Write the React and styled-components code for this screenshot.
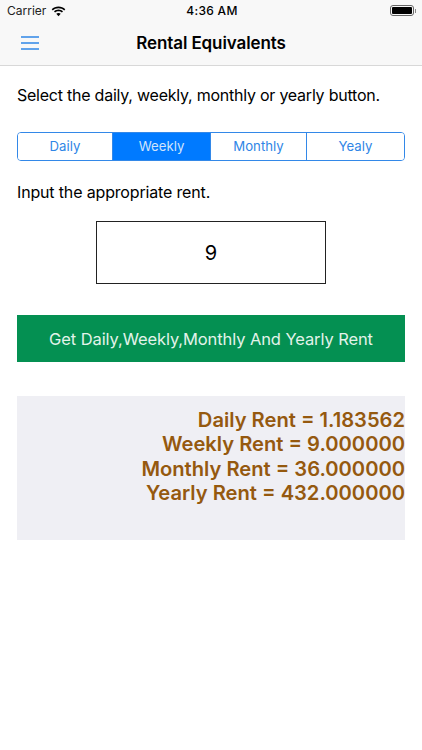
import React from 'react';
import styled, { createGlobalStyle } from 'styled-components';

const GlobalStyle = createGlobalStyle`
  html, body {
    margin: 0;
    padding: 0;
    background: #ffffff;
    font-family: Inter, "Liberation Sans", sans-serif;
    color: #000000;
  }
`;

const segments = ['Daily', 'Weekly', 'Monthly', 'Yealy'];
const results = [
  'Daily Rent = 1.183562',
  'Weekly Rent = 9.000000',
  'Monthly Rent = 36.000000',
  'Yearly Rent = 432.000000',
];

const App = () => {
  return (
    <Page>
      <GlobalStyle />
      <Header>
        <StatusBar>
          <Carrier>
            Carrier
            <svg width="15" height="11" viewBox="0 0 15 11">
              <path d="M7.5 2.2c2.2 0 4.2.8 5.7 2.2l1.1-1.2C12.5 1.5 10.1.5 7.5.5S2.5 1.500.7 3.2l1.1 1.2C3.3 3 5.3 2.2 7.5 2.2z" fill="#000" />
              <path d="M7.5 5.3c1.3 0 2.5.5 3.4 1.3l1.1-1.2C10.800 4.3 9.2 3.6 7.5 3.6s-3.3.7-4.500 1.8l1.1 1.2c.9-.8 2.1-1.3 3.4-1.3z" fill="#000" />
              <path d="M7.5 6.9c-.9 0-1.6.3-2.2.8l2.2 2.6 2.2-2.6c-.6-.5-1.3-.8-2.2-.8z" fill="#000" />
            </svg>
          </Carrier>
          <Clock>4:36 AM</Clock>
          <Battery>
            <BatteryBody>
              <BatteryFill />
            </BatteryBody>
            <BatteryTip />
          </Battery>
        </StatusBar>
        <NavBar>
          <MenuButton>
            <svg width="18" height="14" viewBox="0 0 18 14">
              <path d="M0 1h18M0 7h18M0 13h18" stroke="#2f86e6" strokeWidth="1.4" fill="none" />
            </svg>
          </MenuButton>
          <Title>Rental Equivalents</Title>
        </NavBar>
      </Header>
      <Content>
        <Prompt>Select the daily, weekly, monthly or yearly button.</Prompt>
        <SegmentBar>
          {segments.map((label) => (
            <Segment key={label} $active={label === 'Weekly'}>
              {label}
            </Segment>
          ))}
        </SegmentBar>
        <InputLabel>Input the appropriate rent.</InputLabel>
        <RentBox>9</RentBox>
        <SubmitButton>Get Daily,Weekly,Monthly And Yearly Rent</SubmitButton>
        <ResultPanel>
          {results.map((line) => (
            <ResultLine key={line}>{line}</ResultLine>
          ))}
        </ResultPanel>
      </Content>
    </Page>
  );
};

const Page = styled.div`
  width: 422px;
  height: 750px;
  overflow: hidden;
  background: #ffffff;
`;

const Header = styled.div`
  height: 65px;
  background: #f8f8f8;
  border-bottom: 1px solid #d8d8d8;
`;

const StatusBar = styled.div`
  height: 21px;
  padding: 0 7px;
  display: grid;
  grid-template-columns: 1fr auto 1fr;
  align-items: center;
  font-size: 12px;
`;

const Carrier = styled.div`
  display: flex;
  align-items: center;
  gap: 5px;
  color: #222222;

  svg {
    margin-top: 1px;
  }
`;

const Clock = styled.div`
  font-weight: 500;
  font-size: 12px;
  letter-spacing: 0.3px;
  margin-left: 2px;
`;

const Battery = styled.div`
  display: flex;
  align-items: center;
  justify-content: flex-end;
  margin-right: -1px;
`;

const BatteryBody = styled.div`
  width: 24px;
  height: 11px;
  box-sizing: border-box;
  border: 1px solid #666666;
  border-radius: 3px;
  padding: 1px;
`;

const BatteryFill = styled.div`
  height: 100%;
  background: #000000;
  border-radius: 1px;
`;

const BatteryTip = styled.div`
  width: 1px;
  height: 4px;
  margin-left: 1px;
  background: #888888;
`;

const NavBar = styled.div`
  position: relative;
  height: 44px;
  display: flex;
  align-items: center;
  justify-content: center;
`;

const MenuButton = styled.div`
  position: absolute;
  left: 21px;
  top: 15px;
  line-height: 0;
`;

const Title = styled.div`
  font-size: 17px;
  font-weight: 600;
  letter-spacing: -0.1px;
`;

const Content = styled.div`
  padding: 0 17px;
  display: flex;
  flex-direction: column;
`;

const Prompt = styled.div`
  margin-top: 19px;
  height: 21px;
  font-size: 16px;
  line-height: 21px;
  letter-spacing: -0.235px;
  white-space: nowrap;
`;

const SegmentBar = styled.div`
  margin-top: 26px;
  height: 29px;
  box-sizing: border-box;
  display: grid;
  grid-template-columns: 95px 98px 96px 1fr;
  border: 1px solid #3388e8;
  border-radius: 4px;
  overflow: hidden;
`;

const Segment = styled.div`
  display: flex;
  align-items: center;
  justify-content: center;
  font-size: 13.2px;
  padding-bottom: 1px;
  color: ${(props) => (props.$active ? '#cfe4fb' : '#2f86e6')};
  background: ${(props) => (props.$active ? '#007aff' : '#ffffff')};
  border-right: 1px solid #3388e8;

  &:last-child {
    border-right: none;
  }
`;

const InputLabel = styled.div`
  margin-top: 21px;
  height: 21px;
  font-size: 16px;
  line-height: 21px;
  letter-spacing: -0.16px;
`;

const RentBox = styled.div`
  margin: 18px auto 0;
  width: 230px;
  height: 63px;
  box-sizing: border-box;
  border: 1px solid #222222;
  display: flex;
  align-items: center;
  justify-content: center;
  font-size: 20px;
`;

const SubmitButton = styled.div`
  margin-top: 31px;
  height: 47px;
  background: #049052;
  color: #e2f3ea;
  display: flex;
  align-items: center;
  justify-content: center;
  font-size: 16.5px;
  letter-spacing: -0.1px;
  white-space: nowrap;
`;

const ResultPanel = styled.div`
  margin-top: 34px;
  height: 144px;
  box-sizing: border-box;
  padding-top: 12px;
  background: #efeff4;
  display: flex;
  flex-direction: column;
  align-items: flex-end;
`;

const ResultLine = styled.div`
  font-size: 20.15px;
  font-weight: 600;
  line-height: 24.4px;
  color: #95590f;
  white-space: nowrap;
`;

export default App;
